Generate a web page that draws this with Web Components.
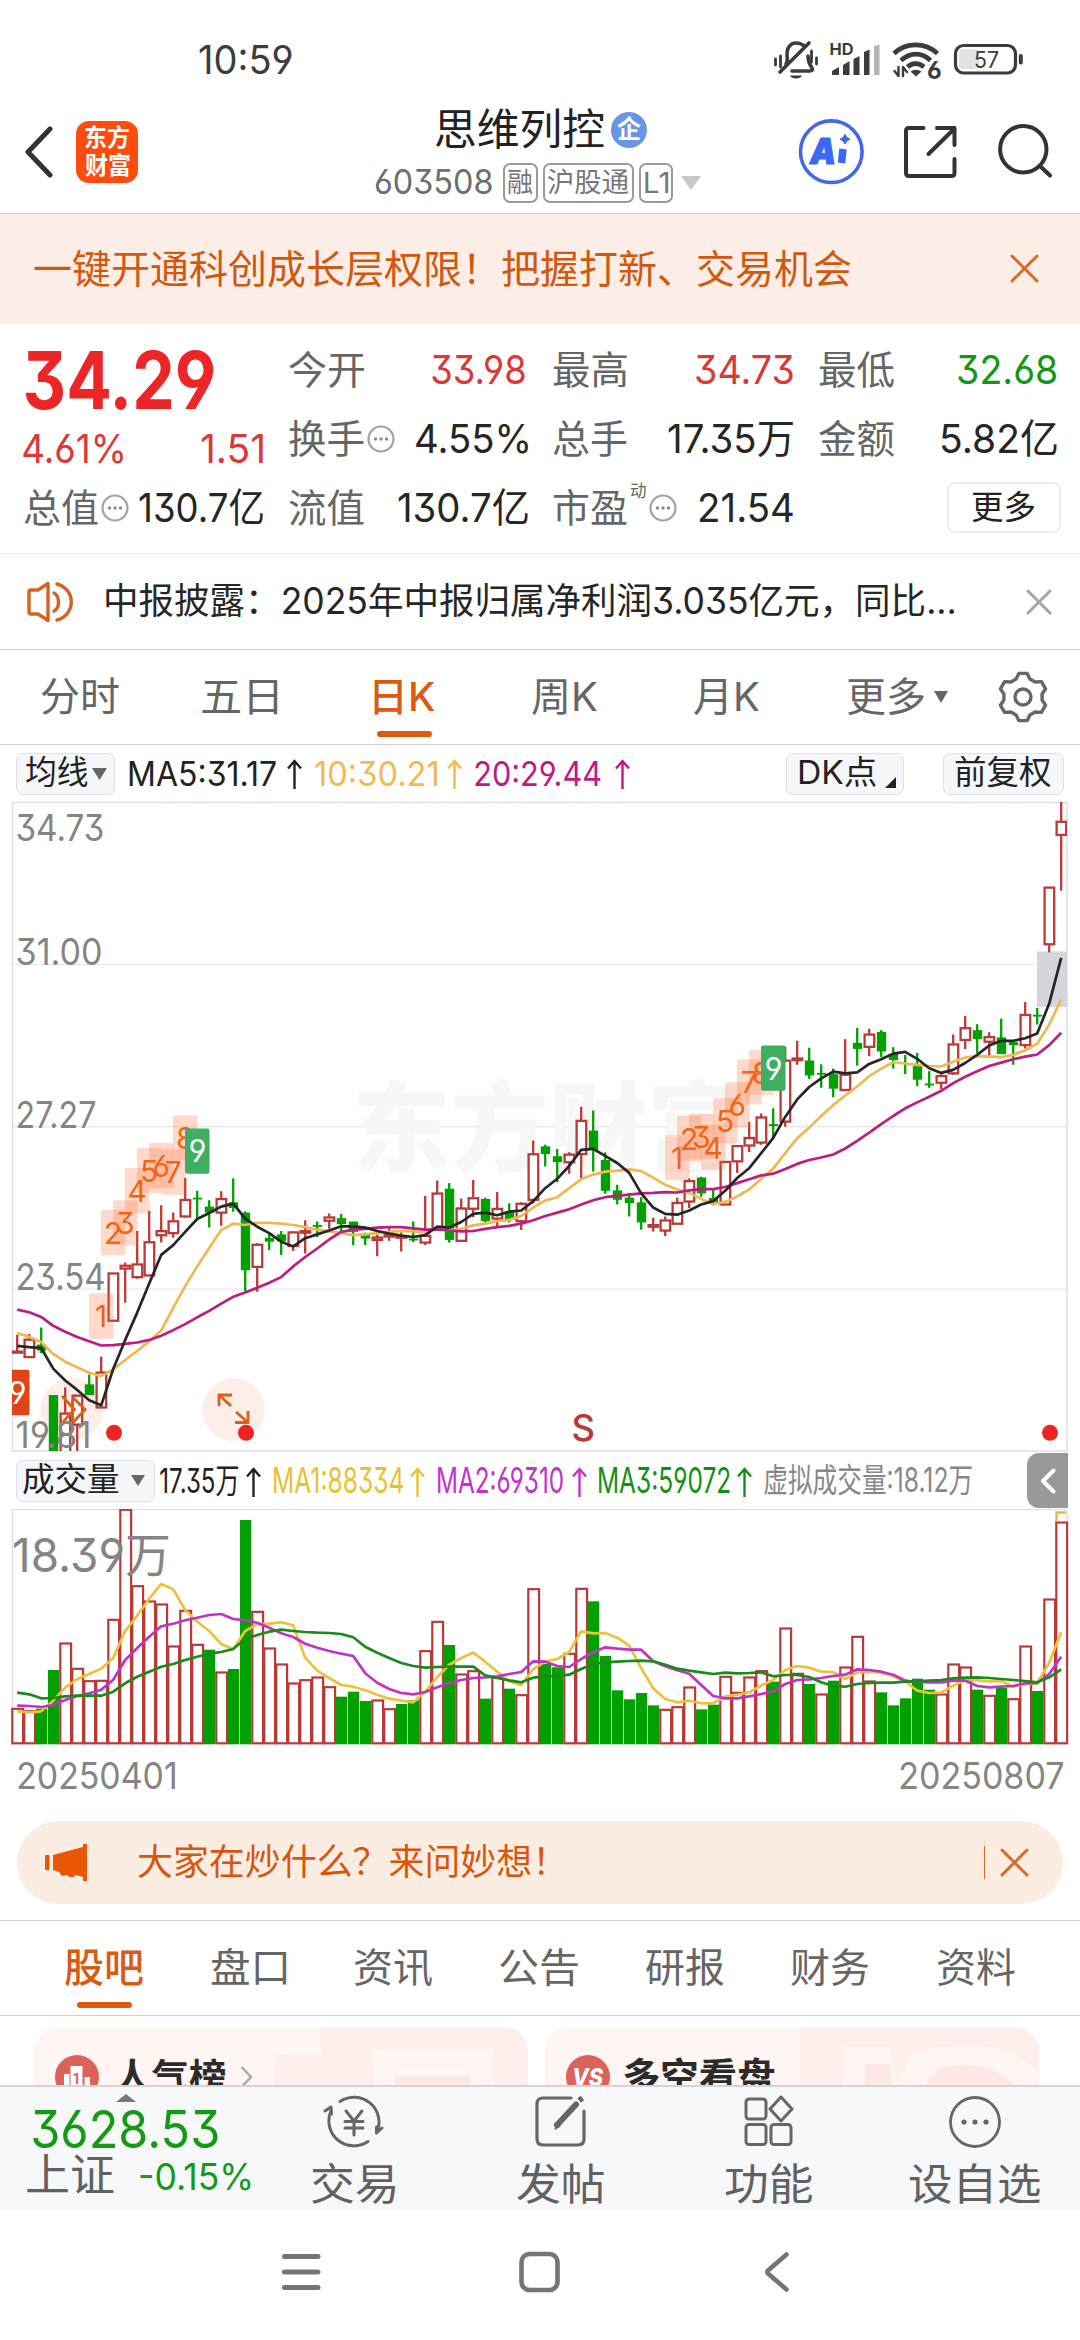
<!DOCTYPE html>
<html lang="zh-CN">
<head>
<meta charset="utf-8">
<title>思维列控 603508</title>
<style>
  html, body { margin: 0; padding: 0; background: #fff; }
  body {
    width: 1080px; height: 2340px; overflow: hidden;
    font-family: Inter, "Noto Sans CJK SC", sans-serif;
    font-feature-settings: "cv03", "cv04", "cv09";
    color: #2a2a2a;
  }
  stock-app { display: block; }
</style>
</head>
<body>
<stock-app></stock-app>

<script>
const define = (name, html, setup) => {
  const tpl = document.createElement('template');
  tpl.innerHTML = html;
  customElements.define(name, class extends HTMLElement {
    constructor() {
      super();
      this.attachShadow({ mode: 'open' }).append(tpl.content.cloneNode(true));
    }
    connectedCallback() { if (setup) setup(this, this.shadowRoot); }
  });
};

/* fit-text: one line of text whose inked width is set by the "w" attribute */
const pen = document.createElement('canvas').getContext('2d');
const fitQueue = [];
customElements.define('fit-text', class extends HTMLElement {
  constructor() {
    super();
    this.attachShadow({ mode: 'open' }).innerHTML = `
      <style>
        :host { display: block; flex: none; line-height: 1; white-space: nowrap; }
        span { display: inline-block; transform-origin: 0 50%; vertical-align: top; }
      </style><span><slot></slot></span>`;
  }
  connectedCallback() {
    this.style.width = this.getAttribute('w') + 'px';
    this.style.fontSize = this.getAttribute('s') + 'px';
    if (this.hasAttribute('c')) this.style.color = this.getAttribute('c');
    if (this.hasAttribute('b')) this.style.fontWeight = this.getAttribute('b');
    fitQueue.push(this);
  }
  fit() {
    const cs = getComputedStyle(this);
    pen.font = `${cs.fontWeight} ${cs.fontSize} ${cs.fontFamily}`;
    const m = pen.measureText(this.textContent.trim());
    const ink = m.actualBoundingBoxRight + m.actualBoundingBoxLeft;
    const k = +this.getAttribute('w') / ink;
    const span = this.shadowRoot.querySelector('span');
    span.style.transform = `scaleX(${k}) translateX(${m.actualBoundingBoxLeft}px)`;
  }
});

/* ---------- status bar ---------- */
define('status-bar', `
<style>
  :host { display: flex; height: 80px; align-items: center; box-sizing: border-box; padding: 38px 0 0 199px; color: #3c3c3c; }
  svg { flex: none; margin-left: 479px; overflow: visible; }
</style>
<fit-text w="94" s="39">10:59</fit-text>
<svg width="254" height="44" viewBox="770 37 254 44" fill="none" stroke="#3c3c3c" stroke-width="3.6" stroke-linecap="round" stroke-linejoin="round">
  <path d="M784 64 c2-3 1-7 1-10 c0-7 4-11 9-11 c4 0 6 1 8 3 M806 56 c0 6 2 9 4 12 c1 2 0 3-2 3 H790 M778 72 L807 43"/>
  <path d="M788 75.5 h12 c-1 4-11 4-12 0z" fill="#3c3c3c" stroke="none"/>
  <path d="M773.5 59 v6 M778.5 56 v11 M809.5 51 v11 M814.5 58 v6" stroke-width="2.8"/>
  <g fill="#3c3c3c" stroke="none">
    <path d="M830 75 v-4 l7-4 v8z"/><path d="M841 75 v-10 l6.500-4 v14z"/><path d="M851.500 75 v-16 l6-3 v19z"/><path d="M862 75 v-23 l5.500-2.500 v25.500z"/>
    <path d="M872 75 v-29 l5.500-1.500 v30.500z" fill="#b5b5b5"/>
  </g>
  <text x="827.5" y="55" font-size="16" font-weight="700" fill="#3c3c3c" stroke="none" textLength="24" lengthAdjust="spacingAndGlyphs">HD</text>
  <g stroke-width="4.600" stroke-linecap="butt">
    <path d="M892 53.500 C904 42 923 42 935.500 53.500"/>
    <path d="M899 60.500 C908 52 920 52 928.500 60.500"/>
    <path d="M905.500 67 C910 62.500 917 62.500 922 67"/>
  </g>
  <path d="M908.500 71.500 q5.500-3.500 11 0 l-5.500 5z" fill="#3c3c3c" stroke="none"/>
  <path d="M896.500 67 v9 l-4-5 M901 76 v-9 l4 5" stroke-width="2.400"/>
  <text x="925" y="79" font-size="24" font-weight="700" fill="#3c3c3c" stroke="#fff" stroke-width="3" paint-order="stroke">6</text>
  <rect x="957" y="49" width="20" height="20" rx="4" fill="#e2e2e2" stroke="none"/>
  <rect x="953.500" y="45.500" width="60" height="27.500" rx="8" stroke-width="3.200"/>
  <path d="M1018.800 56 v6.500" stroke-width="4"/>
  <text x="972" y="68" font-size="22.500" fill="#3c3c3c" stroke="none" textLength="25" lengthAdjust="spacingAndGlyphs">57</text>
</svg>`);

/* ---------- title header ---------- */
define('tag-box', `
<style>
  :host { display: flex; box-sizing: border-box; height: 40px; align-items: center; justify-content: center; border: 2px solid #9b9b9b; border-radius: 7px; flex: none; }
</style><slot></slot>`);

define('stock-header', `
<style>
  :host { display: flex; height: 134px; box-sizing: border-box; border-bottom: 1px solid #d2d2d2; align-items: center; padding: 10px 0 0 25px; }
  .logo { flex: none; width: 62px; height: 62px; margin-left: 23px; border-radius: 13px; background: #ff4b0c; display: flex; flex-direction: column; justify-content: center; align-items: center; gap: 4px; }
  .mid { width: 326px; margin-left: 237px; display: flex; flex-direction: column; gap: 12px; padding-top: 8px; }
  .name { display: flex; height: 42px; align-items: center; padding-left: 61px; gap: 7px; }
  .badge { width: 36px; height: 36px; border-radius: 50%; background: #6896e6; display: flex; align-items: center; justify-content: center; }
  .code { display: flex; align-items: center; height: 40px; }
  .acts { margin-left: 96px; }
  svg { flex: none; }
</style>
<svg width="28" height="52" viewBox="0 0 28 52" fill="none" stroke="#333" stroke-width="5" stroke-linejoin="round" stroke-linecap="round"><path d="M25 3 L3 26 L25 49"/></svg>
<div class="logo">
  <fit-text w="44" s="24" b="700" c="#fff">东方</fit-text>
  <fit-text w="45" s="24" b="700" c="#fff">财富</fit-text>
</div>
<div class="mid">
  <div class="name"><fit-text w="168" s="43" c="#222">思维列控</fit-text>
    <div class="badge"><fit-text w="24" s="25" b="700" c="#fff">企</fit-text></div></div>
  <div class="code">
    <fit-text w="118" s="33.500" c="#6e6e6e">603508</fit-text>
    <tag-box style="width:35px;margin-left:10px"><fit-text w="25" s="27" c="#777">融</fit-text></tag-box>
    <tag-box style="width:91px;margin-left:5px"><fit-text w="81" s="27" c="#777">沪股通</fit-text></tag-box>
    <tag-box style="width:34px;margin-left:5px"><fit-text w="23" s="28" c="#777">L1</fit-text></tag-box>
    <svg width="20" height="14" viewBox="0 0 20 14" style="margin-left:8px"><path d="M0 0H20L10 14z" fill="#c8c8c8"/></svg>
  </div>
</div>
<svg class="acts" width="258" height="68" viewBox="797 118 258 68" fill="none" stroke="#333" stroke-width="4" stroke-linecap="round" stroke-linejoin="round">
  <circle cx="831.300" cy="151.700" r="30.800" stroke="#4469e6" stroke-width="3.600"/>
  <text x="810" y="164" font-size="36" font-weight="900" font-style="italic" fill="#3a68f8" stroke="#3a68f8" stroke-width="1.200" textLength="26" lengthAdjust="spacingAndGlyphs">A</text>
  <path d="M843 149 L841.500 163" stroke="#3a68f8" stroke-width="7.500" stroke-linecap="butt"/>
  <path d="M845 134.500 l1.800 3 3.200 1.700 -3.200 1.800 -1.800 3 -1.800-3 -3.200-1.800 3.200-1.700z" fill="#3a68f8" stroke="#3a68f8" stroke-width="1"/>
  <path d="M923.500 128 H909 q-3 0-3 3 V173 q0 3 3 3 H951.500 q3 0 3-3 V159 M954.500 145 V128 H937 M954 129 L928.500 154"/>
  <circle cx="1023.300" cy="149.300" r="23.200"/><path d="M1040 166 L1050 175.500"/>
</svg>`);

/* ---------- promo strip ---------- */
define('promo-banner', `
<style>
  :host { display: flex; height: 110px; box-sizing: border-box; padding: 0 41px 1px 34px; align-items: center; justify-content: space-between; background: #fceee6; }
</style>
<fit-text w="817" s="39" c="#d0580f">一键开通科创成长层权限！把握打新、交易机会</fit-text>
<svg width="29" height="29" viewBox="0 0 29 29" stroke="#d96a2c" stroke-width="3" stroke-linecap="round"><path d="M2 2L27 27M27 2L2 27"/></svg>`);

/* ---------- quotes ---------- */
define('info-dot', `
<style>:host { display: block; flex: none; width: 28px; height: 30px; } svg { display: block; }</style>
<svg width="28" height="30" viewBox="0 0 28 30"><circle cx="14" cy="15" r="12.500" fill="none" stroke="#a2a2a2" stroke-width="2.200"/><g fill="#8a8a8a"><circle cx="8.500" cy="15" r="1.700"/><circle cx="14" cy="15" r="1.700"/><circle cx="19.500" cy="15" r="1.700"/></g></svg>`);

define('quote-cell', `
<style>:host { display: flex; align-items: center; justify-content: space-between; } div { display: flex; align-items: center; gap: 3px; }</style>
<div><slot name="label"></slot></div><slot></slot>`);

define('quote-panel', `
<style>
  :host { display: grid; box-sizing: border-box; height: 230px; padding: 11px 25px 11px; border-bottom: 1px solid #ebebeb;
    grid-template-columns: 238px 239px 240px 238px; column-gap: 25.500px; grid-template-rows: 69px 69px 69px; }
  .now { grid-row: 1 / 3; display: flex; flex-direction: column; padding-top: 17px; gap: 22px; }
  .chg { display: flex; justify-content: space-between; }
  .more { justify-self: end; margin-right: -4px; width: 114px; height: 51px; box-sizing: border-box; border: 2px solid #ececec; border-radius: 8px; display: flex; align-items: center; justify-content: center; align-self: center; }
</style>
<div class="now">
  <fit-text w="191" s="80" b="650" c="#ee2526" style="height:56px;line-height:56px">34.29</fit-text>
  <div class="chg"><fit-text w="101" s="39.500" c="#d93a37" style="margin-left:-2px">4.61%</fit-text><fit-text w="62" s="39.500" c="#d93a37">1.51</fit-text></div>
</div>
<quote-cell><fit-text slot="label" w="75" s="39" c="#666">今开</fit-text><fit-text w="96" s="40" c="#d93a37">33.98</fit-text></quote-cell>
<quote-cell><fit-text slot="label" w="74" s="39" c="#666">最高</fit-text><fit-text w="97" s="40" c="#d93a37">34.73</fit-text></quote-cell>
<quote-cell><fit-text slot="label" w="75" s="39" c="#666">最低</fit-text><fit-text w="99" s="40" c="#149614">32.68</fit-text></quote-cell>
<quote-cell><fit-text slot="label" w="75" s="39" c="#666">换手</fit-text><info-dot slot="label"></info-dot><fit-text w="112" s="40" c="#262626">4.55%</fit-text></quote-cell>
<quote-cell><fit-text slot="label" w="74" s="39" c="#666">总手</fit-text><fit-text w="125" s="40" c="#262626">17.35万</fit-text></quote-cell>
<quote-cell><fit-text slot="label" w="75" s="39" c="#666">金额</fit-text><fit-text w="115" s="40" c="#262626">5.82亿</fit-text></quote-cell>
<quote-cell style="margin-left:-1px"><fit-text slot="label" w="74" s="39" c="#666">总值</fit-text><info-dot slot="label"></info-dot><fit-text w="124" s="40" c="#262626">130.7亿</fit-text></quote-cell>
<quote-cell><fit-text slot="label" w="75" s="39" c="#666">流值</fit-text><fit-text w="130" s="40" c="#262626">130.7亿</fit-text></quote-cell>
<quote-cell><fit-text slot="label" w="74" s="39" c="#666">市盈</fit-text><fit-text slot="label" w="16" s="17.500" c="#666" style="margin-bottom:34px">动</fit-text><info-dot slot="label"></info-dot><fit-text w="93" s="40" c="#262626">21.54</fit-text></quote-cell>
<div class="more"><fit-text w="63" s="33" c="#222">更多</fit-text></div>`);

/* ---------- news ticker ---------- */
define('news-ticker', `
<style>
  :host { display: flex; height: 96px; box-sizing: border-box; border-bottom: 1px solid #d2d2d2; align-items: center; padding: 0 28px 0 27px; }
  .x { margin-left: auto; } svg { flex: none; }
  fit-text { margin-left: 32px; }
</style>
<svg width="47" height="42" viewBox="0 0 47 42" fill="none" stroke="#d2641f" stroke-width="3.400" stroke-linejoin="round" stroke-linecap="round"><path d="M2 11 q0-2 2-2 H11 L21 2.500 V39.500 L11 33 H4 q-2 0-2-2z"/><path d="M27 12 C33 15 33 27 27 30 M30 3 C49 8 49 34 30 39"/></svg>
<fit-text w="849" s="36.500" c="#262626">中报披露：2025年中报归属净利润3.035亿元，同比...</fit-text>
<svg class="x" width="26" height="26" viewBox="0 0 26 26" stroke="#a5a5a5" stroke-width="3" stroke-linecap="round"><path d="M2 2L24 24M24 2L2 24"/></svg>`);

/* ---------- tab bars ---------- */
define('tab-item', `
<style>
  :host { display: flex; flex-direction: column; align-items: center; color: #666; position: relative; }
  :host([on]) { color: #da5a12; }
  i { display: none; position: absolute; bottom: -20px; width: 55px; height: 6px; border-radius: 3px; background: #dd5a10; }
  :host([on]) i { display: block; }
</style><slot></slot><i></i>`);

define('period-tabs', `
<style>
  :host { display: flex; height: 95px; box-sizing: border-box; border-bottom: 1px solid #d2d2d2; align-items: center; padding: 0 0 0 41px; }
  svg { flex: none; }
</style>
<tab-item><fit-text w="78" s="40">分时</fit-text></tab-item>
<tab-item style="margin-left:83px"><fit-text w="76" s="40">五日</fit-text></tab-item>
<tab-item on style="margin-left:96px"><fit-text w="61" s="40" b="500">日K</fit-text></tab-item>
<tab-item style="margin-left:97px"><fit-text w="65" s="40">周K</fit-text></tab-item>
<tab-item style="margin-left:97px"><fit-text w="65" s="40">月K</fit-text></tab-item>
<tab-item style="margin-left:88px"><fit-text w="77" s="40">更多</fit-text></tab-item>
<svg width="14" height="12" viewBox="0 0 14 12" style="margin-left:10px"><path d="M0 0H14L7 12z" fill="#666"/></svg>
<svg id="gear" width="50" height="52" viewBox="-25 -26 50 52" style="margin-left:50px" fill="none" stroke="#666" stroke-width="3.400" stroke-linejoin="round"><path/><circle r="8"/></svg>`,
(host, root) => {
  const pts = [];
  for (let t = 0; t < 6; t++) {
    for (const [d, r] of [[-21, 19.3], [-10, 24], [10, 24], [21, 19.3]]) {
      const a = (t * 60 - 90 + d) * Math.PI / 180;
      pts.push((r * Math.cos(a)).toFixed(1) + ' ' + (r * Math.sin(a)).toFixed(1));
    }
  }
  root.querySelector('#gear path').setAttribute('d', 'M' + pts.join('L') + 'z');
});

define('chip-box', `
<style>
  :host { display: flex; flex: none; box-sizing: border-box; height: 42px; align-items: center; background: #f5f7fa; border: 1.500px solid #dde0e4; border-radius: 7px; }
</style><slot></slot>`);

define('up-arrow', `
<style>:host { display: block; flex: none; width: 15px; height: 30px; } svg { display: block; }</style>
<svg width="15" height="30" viewBox="0 0 15 30" fill="none" stroke="currentColor" stroke-width="2.400"><path d="M7.500 30V2M1 9.500L7.500 2L14 9.500"/></svg>`);

define('ma-legend', `
<style>
  :host { display: flex; height: 57px; box-sizing: border-box; align-items: center; padding-left: 16px; }
  svg { flex: none; }
</style>
<chip-box style="width:99px;padding-left:9px"><fit-text w="62" s="32.500" c="#222">均线</fit-text>
  <svg width="15" height="12" viewBox="0 0 15 12" style="margin-left:4px"><path d="M0 0H15L7.500 12z" fill="#666"/></svg></chip-box>
<fit-text w="147" s="33.500" style="margin:2px 0 0 14px" c="#222">MA5:31.17</fit-text><up-arrow style="margin-left:11px;color:#222"></up-arrow>
<fit-text w="122" s="33.500" style="margin:2px 0 0 13px" c="#f2ba50">10:30.21</fit-text><up-arrow style="margin-left:10px;color:#f2ba50"></up-arrow>
<fit-text w="129" s="33.500" style="margin:2px 0 0 13px" c="#c01886">20:29.44</fit-text><up-arrow style="margin-left:11px;color:#c01886"></up-arrow>
<chip-box style="width:118px;margin-left:156px;padding-left:12px"><fit-text w="77" s="32.500" c="#222">DK点</fit-text>
  <svg width="11" height="11" viewBox="0 0 11 11" style="margin:18px 0 0 9px"><path d="M11 0V11H0z" fill="#222"/></svg></chip-box>
<chip-box style="width:121px;margin-left:39px;padding-left:11px"><fit-text w="96" s="32.500" c="#222">前复权</fit-text></chip-box>`);

/* ---------- charts ---------- */
const X = i => 17.2 + 12 * i;
const poly = (vals, Y, color, w) =>
  `<polyline fill="none" stroke="${color}" stroke-width="${w}" stroke-linejoin="round" points="${vals.map((v, i) => X(i).toFixed(1) + ',' + Y(v).toFixed(1)).join(' ')}"/>`;

/* kind (1 up, 0 down), body top, body bottom, high, low */
const CANDLES = [
[1,1313,1317,1275,1317],[1,1285,1328,1273,1328],[0,1298,1312,1258,1318],[0,1416,1548,1416,1548],[1,1458,1560,1398,1560],
[1,1416,1486,1416,1548],[0,1391,1416,1368,1416],[1,1362,1446,1326,1446],[1,1130,1243,1130,1243],[1,1112,1121,1106,1200],
[1,1109,1141,1032,1144],[1,1057,1137,985,1137],[1,1031,1043,972,1059],[1,1008,1038,989,1048],[1,958,999,908,1001],
[0,954,957,938,1002],[0,975,989,960,1024],[1,956,990,939,1020],[0,965,978,909,987],[0,989,1124,986,1174],
[1,1063,1117,1060,1174],[0,1048,1057,1036,1077],[0,1040,1056,1032,1088],[1,1034,1068,1032,1079],[1,1031,1037,1007,1085],
[0,1018,1022,1010,1046],[1,999,1009,991,1027],[0,1002,1016,992,1035],[0,1010,1034,1010,1065],[0,1041,1050,1036,1065],
[1,1046,1054,1040,1091],[1,1040,1046,1025,1055],[1,1044,1048,1035,1080],[0,1050,1053,1010,1058],[1,1042,1060,950,1065],
[1,943,1030,914,1030],[0,933,1053,920,1059],[1,978,1056,956,1056],[1,954,981,913,1000],[0,957,1009,954,1012],
[1,979,1004,941,1022],[0,986,1006,967,1012],[1,967,1010,965,1030],[1,851,960,820,968],[0,834,852,830,881],
[0,857,871,840,918],[1,852,872,848,898],[1,773,853,741,913],[0,797,842,750,893],[0,866,938,848,945],
[0,937,959,924,970],[0,954,967,943,998],[0,965,1012,953,1029],[1,1017,1023,1001,1033],[1,1006,1032,998,1044],
[1,965,1016,954,1016],[1,914,964,909,978],[0,907,944,905,952],[0,955,965,934,972],[1,869,971,869,971],
[1,832,870,832,896],[1,813,833,777,847],[1,765,826,757,830],[0,782,786,745,816],[1,632,777,600,788],
[1,627,633,587,643],[0,633,668,603,676],[0,662,666,642,697],[0,665,699,652,719],[1,665,703,583,703],
[0,592,606,557,645],[1,571,602,559,623],[0,566,612,562,625],[0,618,632,602,652],[0,640,643,620,665],
[0,646,678,615,693],[0,687,690,658,697],[1,668,686,665,700],[1,594,664,572,667],[1,556,586,529,606],
[0,562,583,548,616],[1,577,590,567,622],[0,579,618,535,618],[0,590,597,590,643],[1,525,598,496,605],
[0,526,530,510,549],[1,227,362,227,380],[1,73,106,28,236]];
const MA5 = [1301,1304,1306,1354,1382,1404,1428,1440,1355,1287,1223,1155,1088,1065,1034,1004,990,975,968,1003,1022,1037,1057,1068,1049,1040,1031,1021,1021,1024,1032,1038,1043,1046,1042,1022,1024,1011,992,989,995,987,984,962,932,910,880,842,840,856,873,896,944,977,992,994,984,970,962,938,908,885,850,814,765,724,695,675,659,663,661,641,630,617,613,629,651,662,655,639,620,598,587,587,581,570,500,393];
const MA10 = [1271,1280,1292,1320,1338,1351,1364,1372,1356,1334,1313,1290,1265,1212,1161,1115,1072,1030,1015,1018,1013,1013,1015,1018,1023,1029,1033,1037,1042,1040,1037,1034,1032,1033,1035,1027,1030,1027,1019,1015,1009,1006,997,977,961,953,932,911,900,893,891,888,892,907,924,935,943,957,969,964,951,935,910,886,850,815,790,763,737,715,694,670,652,637,640,643,646,647,636,626,623,624,625,620,609,594,549,490];
const MA20 = [1216,1222,1233,1254,1268,1280,1290,1300,1299,1296,1293,1287,1277,1264,1250,1234,1219,1202,1186,1176,1165,1153,1140,1115,1093,1073,1052,1034,1029,1027,1024,1023,1023,1026,1029,1028,1031,1033,1032,1027,1023,1020,1015,1007,997,989,981,970,960,953,950,947,944,943,941,942,937,934,934,929,920,911,902,898,887,875,866,860,853,839,821,802,782,763,745,731,718,704,686,671,658,646,638,630,624,619,597,568];

customElements.define('k-chart', class extends HTMLElement {
  constructor() {
    super();
    const Y = v => 790 + v / 2.3403;
    let s = '';
    for (const y of [964.5, 1126.7, 1289]) s += `<path d="M12 ${y}H1067" stroke="#d0d0d0" stroke-width="1.2" stroke-dasharray="1.6 1.6"/>`;
    s += `<text x="352" y="1164" font-size="98" font-weight="900" fill="#f7f7f7" textLength="394" lengthAdjust="spacingAndGlyphs">东方财富</text>`;
    s += `<circle cx="71.500" cy="1409.600" r="31.300" fill="#fdefe8"/><circle cx="233.500" cy="1409.600" r="31.300" fill="#fdefe8"/>`;
    s += `<rect x="1037" y="951.500" width="30" height="55.500" fill="#d3d6dc"/>`;
    CANDLES.forEach(([up, t, b, h, l], i) => {
      const x = X(i), c = up ? '#b93a38' : '#03a003';
      const [T, B, H, L] = [t, b, h, l].map(Y);
      if (up) {
        s += `<path d="M${x} ${H}V${T}M${x} ${B}V${L}" stroke="${c}" stroke-width="2.3"/>`;
        s += `<rect x="${x - 4.6}" y="${T + .6}" width="9.6" height="${Math.max(B - T - 1, 1)}" fill="#fff" stroke="${c}" stroke-width="2.3"/>`;
      } else {
        s += `<path d="M${x} ${H}V${L}" stroke="${c}" stroke-width="2.3"/>`;
        if (i !== 74) s += `<rect x="${x - 4.4}" y="${T}" width="9.4" height="${Math.max(B - T, 1.8)}" fill="${c}"/>`;
      }
    });
    s += `<g fill="none" stroke="#dd5e16" stroke-width="2.800"><path d="M62 1396 L74.500 1409.500 L62 1423 M72.500 1397 L85 1409.500 L72.500 1423 M72.500 1400 V1421"/>
      <path d="M219 1406 V1395 H232 M219 1395 L231 1406 M235 1422.500 H248 V1411 M248 1422.500 L236 1412"/></g>`;
    const tag = (i, top, n) => `<rect x="${X(i) - 12.2}" y="${Y(top)}" width="24.500" height="45.300" rx="1.500" fill="#ff6a2c" fill-opacity=".25"/>
      <text x="${X(i)}" y="${Y(top) + 34}" text-anchor="middle" font-size="30" fill="#ef6414">${n}</text>`;
    [[7,1178,1],[8,983,2],[9,960,3],[10,885,4],[11,838,5],[12,826,6],[13,841,7],[14,761,8],
     [55,807,1],[56,763,2],[57,758,3],[58,783,4],[59,721,5],[60,684,6],[61,630,7],[62,608,8]].forEach(a => s += tag(...a));
    const nine = (i, top, c) => `<rect x="${X(i) - 12.2}" y="${Y(top)}" width="24.500" height="45.300" rx="2" fill="${c}"/>
      <text x="${X(i) + .3}" y="${Y(top) + 34}" text-anchor="middle" font-size="31" fill="#fff">9</text>`;
    s += nine(15, 792, '#3eae62') + nine(63, 598, '#3eae62') + nine(0, 1357, '#e04519');
    s += poly(MA10, Y, '#f0b84f', 2.7) + poly(MA20, Y, '#bd1c80', 2.7) + poly(MA5, Y, '#262626', 2.7);
    for (const x of [114, 246, 1050]) s += `<circle cx="${x}" cy="1432.800" r="8" fill="#ee2424"/>`;
    s += `<text x="571.500" y="1440.500" font-size="37" font-weight="550" fill="#b73836" textLength="23.500" lengthAdjust="spacingAndGlyphs">S</text>`;
    let labels = '';
    [['34.73',841,89],['31.00',965,87],['27.27',1127.5,81],['23.54',1290,90],['19.81',1448,76]].forEach(([t, y, w]) =>
      labels += `<text x="15.500" y="${y}" font-size="37" fill="#858585" textLength="${w}" lengthAdjust="spacingAndGlyphs">${t}</text>`);
    this.attachShadow({ mode: 'open' }).innerHTML = `
      <style>:host { display: block; height: 650px; } svg { display: block; overflow: visible; }</style>
      <svg width="1080" height="650" viewBox="0 802 1080 650">
        <defs><clipPath id="frame"><rect x="12" y="802" width="1055" height="649"/></clipPath></defs>
        <rect x="12.500" y="802.500" width="1054.500" height="648.500" fill="none" stroke="#dfdfdf" stroke-width="1.500"/>
        <g clip-path="url(#frame)">${s}</g>${labels}
      </svg>`;
  }
});

define('volume-legend', `
<style>
  :host { display: flex; height: 57px; box-sizing: border-box; align-items: center; padding-left: 16px; position: relative; }
  svg { flex: none; }
  .fold { margin-left: auto; width: 41px; height: 55px; margin-right: 12px; border-radius: 12px 0 0 12px; background: #999; display: flex; align-items: center; justify-content: center; }
</style>
<chip-box style="width:139px;padding-left:6px"><fit-text w="96" s="32.500" c="#222">成交量</fit-text>
  <svg width="14" height="11" viewBox="0 0 14 11" style="margin-left:12px"><path d="M0 0H14L7 11z" fill="#666"/></svg></chip-box>
<fit-text w="78" s="34" style="margin-left:5px" c="#222">17.35万</fit-text><up-arrow style="margin:2px 0 0 8px;color:#222"></up-arrow>
<fit-text w="129" s="35.500" style="margin-left:13px" c="#ebc032">MA1:88334</fit-text><up-arrow style="margin:2px 0 0 7px;color:#ebc032"></up-arrow>
<fit-text w="128" s="35.500" style="margin-left:13px" c="#c233cc">MA2:69310</fit-text><up-arrow style="margin:2px 0 0 6px;color:#c233cc"></up-arrow>
<fit-text w="132" s="35.500" style="margin-left:12px" c="#148f14">MA3:59072</fit-text><up-arrow style="margin:2px 0 0 6px;color:#148f14"></up-arrow>
<fit-text w="208" s="33.500" style="margin-left:12px" c="#888">虚拟成交量:18.12万</fit-text>
<div class="fold"><svg width="16" height="26" viewBox="0 0 16 26" fill="none" stroke="#fff" stroke-width="4" stroke-linecap="round" stroke-linejoin="round"><path d="M13.500 2.500L3 13L13.500 23.500"/></svg></div>`);

/* positive: up bar, negative: down bar */
const BARS = [805,812,-806,-690,609,685,722,721,538,208,437,483,492,618,511,613,-629,696,-687,-240,514,624,672,729,719,711,740,-770,-755,-783,780,806,-792,-781,632,544,-615,702,692,-776,712,-746,764,446,-672,-682,640,445,-484,-648,-751,-778,-759,-796,808,800,741,-808,-794,709,757,711,692,-725,564,700,-732,762,-722,681,589,723,-757,-796,-775,-716,-749,762,672,681,-749,766,-744,776,618,-753,477,246];
const V1 = [814,817,814,782,743,717,702,686,654,573,527,476,432,448,510,545,573,612,628,573,553,551,547,556,653,692,714,735,740,751,764,776,782,787,755,711,674,654,638,665,695,724,736,688,664,657,636,574,580,579,593,617,685,745,777,787,782,790,790,770,764,757,737,720,690,678,683,695,696,717,697,695,698,709,724,752,759,758,737,719,721,724,723,740,733,730,668,577];
const V2 = [797,798,801,795,780,768,760,749,719,660,624,590,559,551,541,533,525,522,537,541,548,563,580,591,611,623,633,641,648,700,728,747,759,763,756,742,729,720,714,712,709,702,696,664,665,678,681,657,637,622,626,629,629,664,679,691,701,735,768,775,775,769,762,754,732,720,718,714,708,704,688,690,695,704,722,726,727,727,722,722,738,742,740,738,730,729,702,650];
const V3 = [758,763,775,774,769,767,767,767,755,730,710,695,680,672,660,650,641,636,627,597,585,575,569,573,576,578,579,582,592,620,638,654,669,678,683,681,680,680,680,706,714,721,727,713,709,708,704,687,672,667,665,663,662,664,674,686,692,697,702,698,700,699,697,709,705,705,711,727,738,740,732,729,728,728,725,724,722,720,715,713,712,714,717,720,723,727,712,688];

customElements.define('volume-chart', class extends HTMLElement {
  constructor() {
    super();
    const Y = v => 1440 + v / 3;
    let s = '';
    BARS.forEach((v, i) => {
      const x = X(i), y = Y(Math.abs(v));
      s += v > 0
        ? `<rect x="${x - 4.9}" y="${y + .5}" width="10.800" height="${1743.3 - y - .5}" fill="#fff" stroke="#b93a38" stroke-width="2.200"/>`
        : `<rect x="${x - 5.3}" y="${y}" width="11.300" height="${1744.3 - y}" fill="#03a003"/>`;
    });
    s += `<path d="M1056.500 1521V1512.500H1066" fill="none" stroke="#e8bf3a" stroke-width="2.400"/>`;
    s += poly(V1, Y, '#ebc23a', 2.7) + poly(V2, Y, '#bf34c6', 2.7) + poly(V3, Y, '#1a8a1a', 2.7);
    s += `<text x="12" y="1572" font-size="47" fill="#858585" textLength="159" lengthAdjust="spacingAndGlyphs">18.39万</text>`;
    this.attachShadow({ mode: 'open' }).innerHTML = `
      <style>:host { display: block; height: 236px; } svg { display: block; }</style>
      <svg width="1080" height="236" viewBox="0 1509 1080 236">
        <path d="M12.500 1744.500V1509.500H1067V1744.500" fill="none" stroke="#dfdfdf" stroke-width="1.500"/>${s}
      </svg>`;
  }
});

define('date-range', `
<style>:host { display: flex; height: 62px; align-items: center; justify-content: space-between; padding: 0 17px 0 18px; }</style>
<fit-text w="157" s="36.500" c="#858585">20250401</fit-text><fit-text w="163" s="36.500" c="#858585">20250807</fit-text>`);

/* ---------- ask banner ---------- */
define('ask-banner', `
<style>
  :host { display: flex; height: 83px; margin: 14px 17px 16px; box-sizing: border-box; border-radius: 41.500px; background: #fcede3; align-items: center; padding: 0 34px 0 28px; }
  svg { flex: none; } fit-text { margin-left: 51px; } i { width: 1.500px; height: 33px; background: #d96a2c; margin-left: auto; margin-right: 15px; }
</style>
<svg width="42" height="37" viewBox="0 0 42 37" fill="#ea5606"><rect y="11" width="4.500" height="15" rx="1"/><path d="M8 11 L38 3 V0 H42 V37 H38 V33 L31 31 q-3 3-6 2 l-3-2 -5 1 -3-4 -6-2z"/></svg>
<fit-text w="406" s="36.500" c="#d8560c">大家在炒什么？来问妙想！</fit-text>
<i></i>
<svg width="29" height="29" viewBox="0 0 29 29" stroke="#d9662a" stroke-width="3" stroke-linecap="round"><path d="M2 2L27 27M27 2L2 27"/></svg>`);

define('section-tabs', `
<style>
  :host { display: flex; height: 96px; box-sizing: border-box; border-top: 1px solid #d2d2d2; border-bottom: 1px solid #d2d2d2; align-items: center; justify-content: space-between; padding: 0 65px; }
</style>
<tab-item on><fit-text w="78" s="40" b="500">股吧</fit-text></tab-item>
<tab-item><fit-text w="76" s="40">盘口</fit-text></tab-item>
<tab-item><fit-text w="78" s="40">资讯</fit-text></tab-item>
<tab-item><fit-text w="78" s="40">公告</fit-text></tab-item>
<tab-item><fit-text w="78" s="40">研报</fit-text></tab-item>
<tab-item><fit-text w="78" s="40">财务</fit-text></tab-item>
<tab-item><fit-text w="78" s="40">资料</fit-text></tab-item>`);

/* ---------- rank cards ---------- */
define('rank-card', `
<style>
  :host { display: grid; width: 494px; height: 150px; border-radius: 24px; overflow: hidden; background: #fff5f2; }
  ::slotted([slot=art]) { grid-area: 1 / 1; }
  .row { grid-area: 1 / 1; z-index: 1; display: flex; height: 46px; align-items: center; padding: 27px 0 0 21px; }
</style>
<slot name="art"></slot><div class="row"><slot></slot></div>`);

define('card-strip', `
<style>
  :host { display: flex; height: 69px; box-sizing: border-box; overflow: hidden; padding: 11px 0 0 34px; gap: 17px; }
  svg { display: block; flex: none; }
</style>
<rank-card>
  <svg slot="art" width="494" height="150" viewBox="0 0 494 150"><path d="M287 0H494V150H241V28H287z" fill="#feefec"/><path d="M339 22H460V150H339z" fill="#fff5f3"/><path d="M361 49H436V150H361z" fill="#fde8e5"/></svg>
  <svg width="44" height="44" viewBox="0 0 44 44"><circle cx="22" cy="22" r="22" fill="#dc635c"/><path d="M9 19h5.500v20H9zM15.500 11h12v28h-12zM29.500 22h5.500v17h-5.500z" fill="#fff"/><text x="18" y="29" font-size="14" font-weight="700" fill="#dc635c">1</text></svg>
  <fit-text w="110" s="36.500" b="700" c="#2b2b2b" style="margin-left:16px">人气榜</fit-text>
  <svg width="13" height="22" viewBox="0 0 13 22" style="margin-left:15px" fill="none" stroke="#aaa" stroke-width="2.500"><path d="M1.500 1L11 11L1.500 21"/></svg>
</rank-card>
<rank-card>
  <svg slot="art" width="494" height="150" viewBox="0 0 494 150"><path d="M254 0H494V150H254z" fill="#feefed"/><path d="M298 20H345L352 60L366 28Q380 19 410 19H440Q470 22 494 45V150H298z" fill="#fff5f3"/><path d="M320 37H345L349 76H320zM380 150V62Q384 38 420 38Q470 40 480 80z" fill="#fde8e6"/></svg>
  <svg width="44" height="44" viewBox="0 0 44 44"><circle cx="22" cy="22" r="22" fill="#dc635c"/><text x="6" y="31" font-size="25" font-weight="800" font-style="italic" fill="#fff" textLength="31" lengthAdjust="spacingAndGlyphs">VS</text></svg>
  <fit-text w="152" s="37.500" b="700" c="#2b2b2b" style="margin-left:13px">多空看盘</fit-text>
</rank-card>`);

/* ---------- bottom bar ---------- */
define('bar-item', `
<style>:host { display: flex; flex-direction: column; align-items: center; gap: 15px; color: #616161; flex: none; } ::slotted(svg) { display: block; }</style>
<slot name="icon"></slot><slot></slot>`);

define('bottom-bar', `
<style>
  :host { display: flex; height: 125px; box-sizing: border-box; border-top: 2px solid #d2d4d8; background: #f6f8fa; padding: 7px 0 0 27px; align-items: flex-start; }
  .idx { width: 224px; display: flex; flex-direction: column; }
  .idx > svg { margin-left: 89px; display: block; }
  .row { display: flex; gap: 26px; align-items: center; margin-top: -3px; }
</style>
<div class="idx">
  <svg width="20" height="8" viewBox="0 0 20 8"><path d="M10 0L20 8H0z" fill="#777"/></svg>
  <fit-text w="187" s="52" c="#149a14" style="margin:2px 0 0 6px">3628.53</fit-text>
  <div class="row"><fit-text w="87" s="44" c="#616161">上证</fit-text><fit-text w="111" s="37" c="#149a14" style="margin-top:3px">-0.15%</fit-text></div>
</div>
<bar-item style="margin-left:61px">
  <svg slot="icon" width="62" height="54" viewBox="0 0 62 54" fill="none" stroke="#666" stroke-width="3" stroke-linecap="round" stroke-linejoin="round"><path d="M17 7.500 A25 25 0 0 1 54 38 M59 34 L53.500 39 L53.500 33 M45 47.500 A25 25 0 0 1 7.500 18 M2 17 L8 13 L8.500 20"/><path d="M23 17 L31 27 L39 17 M31 27 V41 M22 27.500 H40 M22 34 H40"/></svg>
  <fit-text w="84" s="43.500">交易</fit-text></bar-item>
<bar-item style="margin-left:121px">
  <svg slot="icon" width="52" height="54" viewBox="0 0 52 54" fill="none" stroke="#666" stroke-width="3.200" stroke-linecap="round"><path d="M36 4 H8 Q2 4 2 10 V45 Q2 51 8 51 H43 Q49 51 49 45 V17"/><path d="M44 6.500 L47.500 4" stroke-width="5.600" stroke-linecap="butt"/><path d="M41 10.500 L22 31" stroke-width="6"/><path d="M20 35 L22 29 L25 32z" fill="#666" stroke-width="1"/></svg>
  <fit-text w="87" s="43.500">发帖</fit-text></bar-item>
<bar-item style="margin-left:121px">
  <svg slot="icon" width="50" height="54" viewBox="0 0 50 54" fill="none" stroke="#666" stroke-width="3"><rect x="2" y="5" width="20" height="20" rx="3"/><rect x="2" y="30.500" width="20" height="20" rx="3"/><rect x="27" y="30.500" width="20" height="20" rx="3"/><path d="M37 3 L48 15 L37 27 L26 15z" stroke-linejoin="round"/></svg>
  <fit-text w="87" s="43.500">功能</fit-text></bar-item>
<bar-item style="margin-left:97px">
  <svg slot="icon" width="54" height="54" viewBox="0 0 54 54"><circle cx="27" cy="28" r="24.500" fill="none" stroke="#666" stroke-width="2.800"/><g fill="#666"><circle cx="16" cy="28" r="2.600"/><circle cx="27" cy="28" r="2.600"/><circle cx="38" cy="28" r="2.600"/></g></svg>
  <fit-text w="132" s="43.500">设自选</fit-text></bar-item>`);

define('system-nav', `
<style>:host { display: flex; height: 130px; box-sizing: border-box; align-items: center; padding: 0 0 6px 281px; } svg { display: block; flex: none; }</style>
<svg width="510" height="44" viewBox="281 2250 510 44" fill="none" stroke="#757575" stroke-width="5" stroke-linecap="round" stroke-linejoin="round">
  <path d="M284.500 2256.500H318M284.500 2272H318M284.500 2287.500H318"/>
  <rect x="521.500" y="2254" width="36" height="36" rx="8" stroke-width="4.600"/>
  <path d="M786.500 2254.500L768 2270.500q-1.600 1.500 0 3L786.500 2289.500" stroke-width="4.600"/>
</svg>`);

define('stock-app', `
<style>:host { display: flex; flex-direction: column; width: 1080px; }</style>
<status-bar></status-bar>
<stock-header></stock-header>
<promo-banner></promo-banner>
<quote-panel></quote-panel>
<news-ticker></news-ticker>
<period-tabs></period-tabs>
<ma-legend></ma-legend>
<k-chart></k-chart>
<volume-legend></volume-legend>
<volume-chart></volume-chart>
<date-range></date-range>
<ask-banner></ask-banner>
<section-tabs></section-tabs>
<card-strip></card-strip>
<bottom-bar></bottom-bar>
<system-nav></system-nav>`);

fitQueue.forEach(el => el.fit());
</script>
</body>
</html>
